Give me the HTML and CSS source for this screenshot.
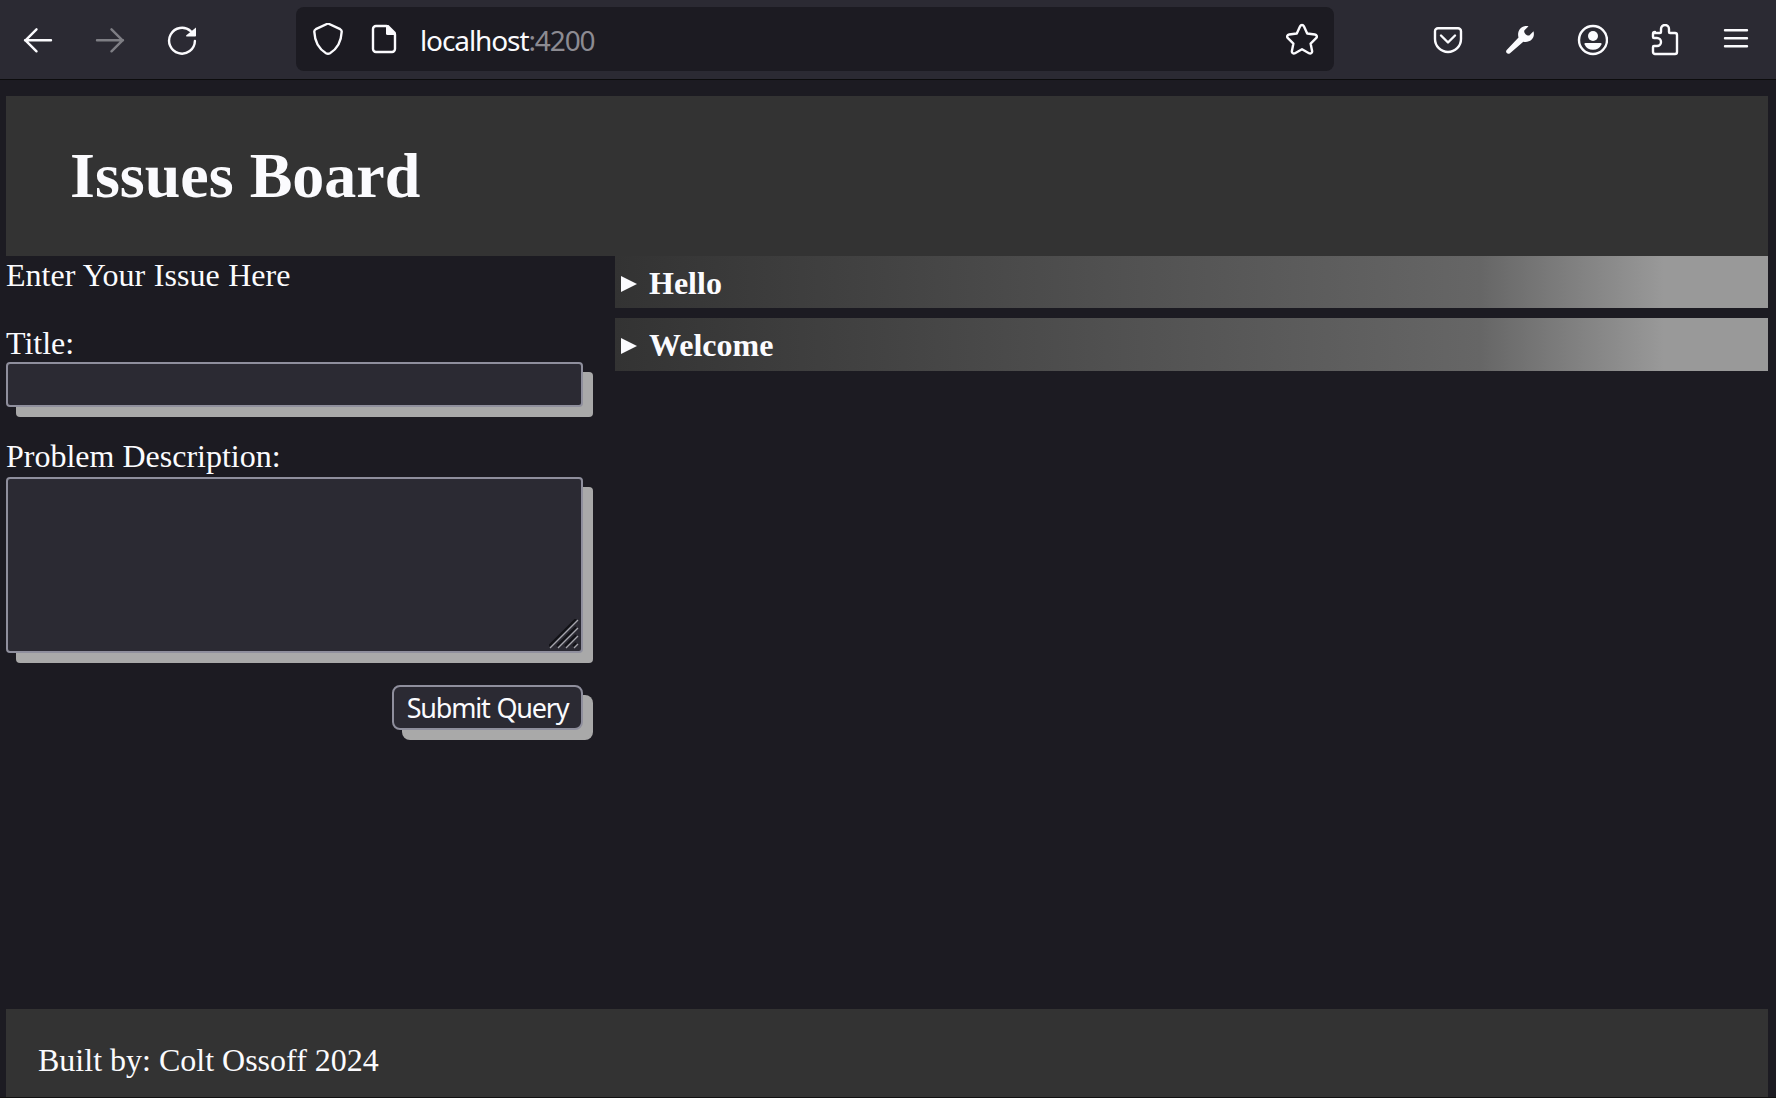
FILE: index.html
```html
<!DOCTYPE html>
<html lang="en">
<head>
<meta charset="utf-8">
<title>Issues Board</title>
<link rel="stylesheet" href="styles.css">
</head>
<body>
<div class="window">
  <nav class="toolbar">
    <div class="nav-buttons">
      <svg class="icon" viewBox="0 0 32 32"><path d="M29 16.300H3M14.500 5.300 3.500 16.300l11 11" /></svg>
      <svg class="icon dim" viewBox="0 0 32 32"><path d="M3 16.300h26M17.500 5.300l11 11-11 11" /></svg>
      <svg class="icon" viewBox="0 0 32 32"><path d="M28.900 17A12.900 12.900 0 1 1 24.700 7.200" /><path class="solid" d="M30 3.500v8.300a.8.8 0 0 1-.8.800h-8.300c-.8 0-1.100-.8-.6-1.300z" /></svg>
    </div>
    <div class="urlbar">
      <svg class="icon" viewBox="0 0 32 32"><path d="M16 .500 28.200 6.200Q29.800 7 29.700 8.800C29.200 19 26 25.500 18 30.200Q16 31.300 14 30.200C6 25.500 2.800 19 2.300 8.800Q2.200 7 3.800 6.200z" /></svg>
      <svg class="icon page-icon" viewBox="0 0 32 32"><path d="M18.500 3H8a3 3 0 0 0-3 3v20a3 3 0 0 0 3 3h16a3 3 0 0 0 3-3V11.500" /><path class="solid" d="M18 2h2.500L28 9.500V12h-8.500a1.500 1.500 0 0 1-1.500-1.500z" /></svg>
      <div class="address">localhost<span>:4200</span></div>
      <svg class="icon star" viewBox="0 0 32 32"><path d="M14.100 3.300c.8-1.700 3-1.700 3.800 0l3.300 7.200 7.700 1c1.900.3 2.600 2.400 1.200 3.700l-5.500 5.400 1.500 7.400c.3 1.800-1.400 3.100-3.100 2.200L16 26.300l-7 3.900c-1.700.9-3.400-.4-3.100-2.200l1.500-7.400-5.500-5.400c-1.400-1.300-.7-3.400 1.200-3.700l7.700-1z" /></svg>
    </div>
    <div class="actions">
      <svg class="icon" viewBox="0 0 32 32"><path d="M6 4.200h20a3 3 0 0 1 3 3V15a13 13 0 0 1-26 0V7.200a3 3 0 0 1 3-3zM9 11.500l7 7 7-7" /></svg>
      <svg class="icon" viewBox="0 0 32 32"><path class="solid" d="M24.500 2.300 20.300 6.500c-.7 2.600 2.300 5.500 5 5l4.200-4.200c2 6.800-3.500 11.900-10.200 10.500L6 29.300C3.500 31 .8 28.200 2.700 26L14.500 13.500C12.500 6.500 18 .5 24.500 2.300z" /></svg>
      <svg class="icon" viewBox="-1 0 32 32"><circle cx="16" cy="16" r="14" /><circle class="solid" cx="16" cy="12" r="5" /><path class="solid" d="M8.500 19h15q1.500 0 .9 1.400a9.200 9.200 0 0 1-16.800 0Q7 19 8.500 19z" /></svg>
      <svg class="icon" viewBox="-1 0 32 32"><path d="M5 9h6a1 1 0 0 0 1-1V5a4 4 0 0 1 8 0v3a1 1 0 0 0 1 1h5a2 2 0 0 1 2 2v17a2 2 0 0 1-2 2H6a2 2 0 0 1-2-2v-5a1 1 0 0 1 1-1h3a4 4 0 0 0 0-8H5a1 1 0 0 1-1-1v-3a2 2 0 0 1 2-2" /></svg>
      <svg class="icon" viewBox="0 0 32 32"><path d="M5 6.300h22M5 14.300h22M5 22.300h22" /></svg>
    </div>
  </nav>

  <div class="page">
    <header class="banner"><h1>Issues Board</h1></header>
    <main class="content">
      <form class="issue-form">
        <p>Enter Your Issue Here</p>
        <label for="title">Title:</label>
        <input id="title" class="field" type="text">
        <label for="description">Problem Description:</label>
        <div class="field description">
          <textarea id="description"></textarea>
          <svg class="grip" viewBox="0 0 30 30"><path class="grip-dark" d="M0 27 27 0M8 27 27 8M16 27l11-11M24 27l3-3" /><path d="M1 29 29 1M9 29 29 9M17 29l12-12M25 29l4-4" /></svg>
        </div>
        <button class="submit" type="button">Submit Query</button>
      </form>
      <section class="issues">
        <div class="issue"><svg class="marker" viewBox="0 0 16 16"><path d="M0 0 16 8 0 16z" /></svg>Hello</div>
        <div class="issue second"><svg class="marker" viewBox="0 0 16 16"><path d="M0 0 16 8 0 16z" /></svg>Welcome</div>
      </section>
    </main>
    <footer class="footer">Built by: Colt Ossoff 2024</footer>
  </div>
</div>
</body>
</html>
```

FILE: styles.css
```css
* { box-sizing: border-box; }
body {
  margin: 0;
  background: #1c1b22;
  color: #fbfbfe;
  font: 32px/37px "Liberation Serif", serif;
}
.window {
  height: 1098px;
  display: flex;
  flex-direction: column;
  overflow: hidden;
  border-bottom: 1px solid #111;
}
.toolbar {
  flex: none;
  height: 80px;
  display: flex;
  background: #2b2a33;
  border-bottom: 1px solid #0c0c0d;
}
.icon {
  flex: none;
  width: 32px;
  height: 32px;
  fill: none;
  stroke: #fbfbfe;
  stroke-width: 2.4;
  stroke-linecap: round;
  stroke-linejoin: round;
}
.icon .solid { fill: #fbfbfe; stroke: none; }
.dim { opacity: .4; }
.nav-buttons {
  width: 296px;
  display: flex;
  gap: 40px;
  padding: 24px 0 0 22px;
}
.urlbar {
  width: 1038px;
  height: 64px;
  margin-top: 7px;
  padding: 16px 16px 0;
  display: flex;
  background: #1c1b22;
  border-radius: 8px;
}
.page-icon { margin-left: 24px; }
.address {
  flex: 1;
  margin: -2px 0 0 20px;
  font: 28px/38px "Noto Sans", sans-serif;
  letter-spacing: -1.1px;
}
.address span { color: #8c8b92; }
.actions {
  display: flex;
  gap: 40px;
  padding: 24px 0 0 98px;
}
.page {
  flex: 1;
  display: flex;
  flex-direction: column;
  padding: 16px 8px 0 6px;
}
.banner {
  height: 160px;
  padding: 43px 64px;
  background: #333;
}
h1 { margin: 0; font-size: 64px; line-height: 74px; }
.content { flex: 1; display: flex; gap: 32px; }
.issue-form {
  width: 577px;
  display: flex;
  flex-direction: column;
  padding-top: 1px;
}
.issue-form p { margin: 0 0 31px; word-spacing: .6px; }
.field {
  display: block;
  width: 100%;
  height: 45px;
  margin: 0 0 31px;
  background: #2b2a33;
  border: 2px solid #8f8f9d;
  border-radius: 4px;
  box-shadow: 10px 10px #a9a9a9;
}
.description {
  position: relative;
  height: 176px;
  margin: 2px 0 32px;
}
textarea {
  display: block;
  width: 100%;
  height: 100%;
  background: none;
  border: 0;
  resize: none;
}
.grip {
  position: absolute;
  right: 2px;
  bottom: 2px;
  width: 30px;
  height: 30px;
  fill: none;
  stroke: #a5a5ab;
  stroke-width: 1.3;
}
.grip-dark { stroke: #111116; stroke-width: 2; }
.submit {
  align-self: flex-end;
  width: 191px;
  height: 45px;
  padding: 0;
  color: #fbfbfe;
  background: #2b2a33;
  border: 2px solid #8f8f9d;
  border-radius: 8px;
  box-shadow: 10px 10px #a9a9a9;
  font: 27px/40px "Noto Sans", sans-serif;
  letter-spacing: -1.2px;
  word-spacing: 1px;
  white-space: nowrap;
}
.issues { flex: 1; display: flex; flex-direction: column; gap: 10px; }
.issue {
  height: 52px;
  display: flex;
  align-items: flex-start;
  padding: 9px 6px 0;
  font-weight: bold;
  background: linear-gradient(to right, #333, #666 75%, #999 91%);
}
.second { height: 53px; }
.marker {
  width: 16px;
  height: 16px;
  margin: 11px 12px 0 0;
  fill: #fbfbfe;
}
.footer {
  height: 88px;
  padding: 33px 32px 0;
  background: #333;
}
```
